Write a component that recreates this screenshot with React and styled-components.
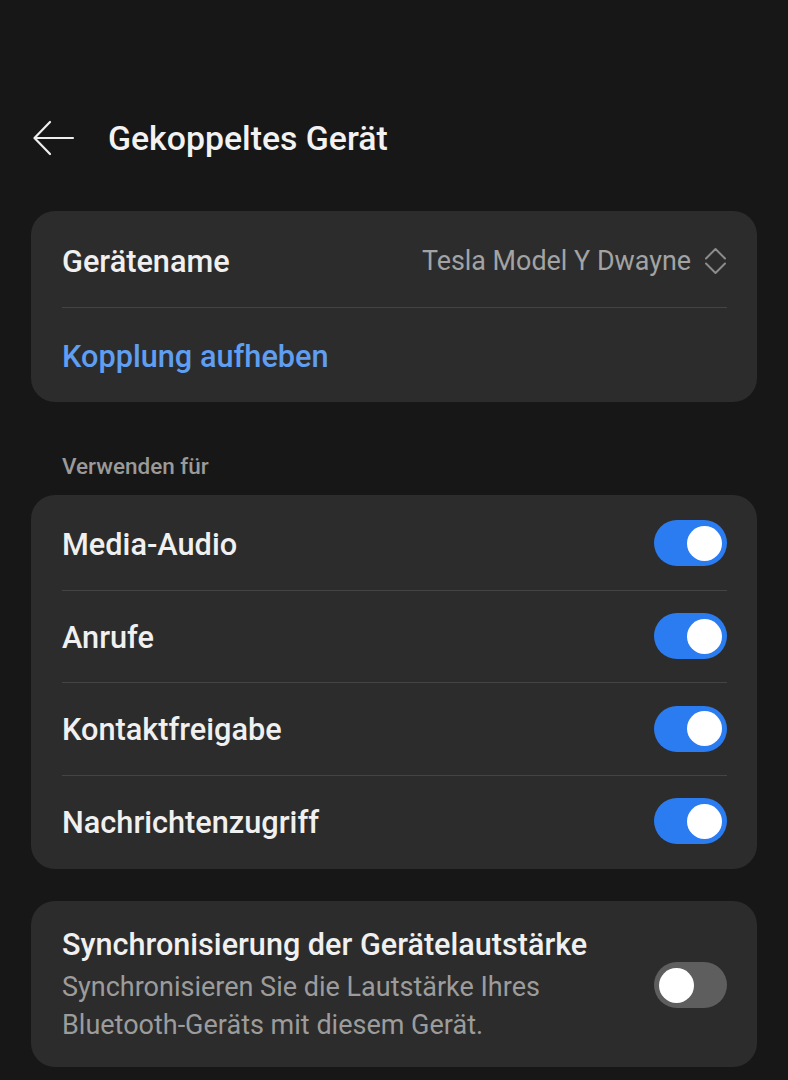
import React, { useState } from "react";
import styled, { createGlobalStyle } from "styled-components";

const GlobalStyle = createGlobalStyle`
  html, body {
    margin: 0;
    padding: 0;
    background: #171717;
  }
  body {
    font-family: Roboto, "Noto Sans", "Liberation Sans", sans-serif;
    -webkit-font-smoothing: antialiased;
  }
`;

const StyledPage = styled.div`
  width: 788px;
  min-height: 1080px;
  box-sizing: border-box;
  padding: 110px 31px 0;
  background: #171717;
`;

const StyledHeader = styled.div`
  height: 56px;
  display: flex;
  align-items: center;
  gap: 33px;
  margin-bottom: 45px;
  padding-left: 2px;
`;

const BackButton = styled.button`
  width: 42px;
  height: 42px;
  padding: 0;
  border: none;
  background: none;
  display: flex;
  align-items: center;
  justify-content: center;
`;

const Title = styled.h1`
  margin: 0;
  font-size: 33.8px;
  font-weight: 500;
  color: #f2f2f2;
`;

const Card = styled.div`
  background: #2c2c2c;
  border-radius: 24px;
  padding: ${(p) => p.$pad || "0"} 30px ${(p) => p.$padBottom || p.$pad || "0"} 31px;
  margin-bottom: ${(p) => p.$gap || "0"};
`;

const Row = styled.div`
  height: ${(p) => p.$height || 94}px;
  display: flex;
  align-items: center;
  justify-content: space-between;
  border-top: ${(p) => (p.$divider ? "1.5px solid #444444" : "none")};
  box-sizing: border-box;
`;

const Label = styled.span`
  padding-top: ${(p) => p.$nudge || 2}px;
  font-size: 30.7px;
  font-weight: 500;
  color: ${(p) => (p.$link ? "#5f9ef0" : "#f0f0f0")};
`;

const Value = styled.div`
  display: flex;
  align-items: center;
  gap: 13px;
  padding-top: 3px;
  font-size: 26.9px;
  color: #a3a3a3;
`;

const SectionLabel = styled.div`
  padding: 50px 0 0 31px;
  height: 28px;
  line-height: 28px;
  margin-bottom: 15px;
  font-size: 22.5px;
  font-weight: 500;
  color: #9a9a9a;
`;

const SyncRow = styled.div`
  display: flex;
  align-items: center;
  justify-content: space-between;
  gap: 20px;
`;

const SyncText = styled.div`
  display: flex;
  flex-direction: column;
`;

const SyncTitle = styled.div`
  font-size: 30.6px;
  font-weight: 500;
  line-height: 38px;
  margin-bottom: 4px;
  color: #f0f0f0;
  white-space: nowrap;
`;

const SyncDesc = styled.div`
  font-size: 27px;
  line-height: 38px;
  color: #9c9c9c;
  white-space: nowrap;
`;

const Track = styled.button`
  flex: none;
  width: 73px;
  height: 46px;
  border-radius: 23px;
  border: none;
  padding: 0 5px;
  display: flex;
  align-items: center;
  justify-content: ${(p) => (p.$on ? "flex-end" : "flex-start")};
  background: ${(p) => (p.$on ? "#2b7cf1" : "#5e5e5e")};
  cursor: pointer;
`;

const Knob = styled.span`
  width: 35px;
  height: 35px;
  border-radius: 50%;
  background: #ffffff;
`;

const Toggle = ({ on, onClick }) => (
  <Track $on={on} onClick={onClick}>
    <Knob />
  </Track>
);

const BackIcon = () => (
  <svg width="42" height="42" viewBox="0 0 42 42" fill="none">
    <path
      d="M40 21 H2 M17 5 L1.5 21 L17 37"
      stroke="#eeeeee"
      strokeWidth="2.2"
      strokeLinecap="round"
      strokeLinejoin="round"
    />
  </svg>
);

const UpDownIcon = () => (
  <svg width="23" height="28" viewBox="0 0 23 28" fill="none">
    <path
      d="M2 11.5 L11.5 2 L21 11.5 M2 16.5 L11.5 26 L21 16.5"
      stroke="#8c8c8c"
      strokeWidth="2"
      strokeLinecap="round"
      strokeLinejoin="round"
    />
  </svg>
);

const App = () => {
  const [uses, setUses] = useState([
    { name: "Media-Audio", on: true },
    { name: "Anrufe", on: true },
    { name: "Kontaktfreigabe", on: true },
    { name: "Nachrichtenzugriff", on: true },
  ]);
  const [sync, setSync] = useState(false);

  const flip = (i) =>
    setUses(uses.map((u, j) => (j === i ? { ...u, on: !u.on } : u)));

  return (
    <StyledPage>
      <GlobalStyle />
      <StyledHeader>
        <BackButton>
          <BackIcon />
        </BackButton>
        <Title>Gekoppeltes Gerät</Title>
      </StyledHeader>

      <Card>
        <Row $height={96}>
          <Label $nudge={4}>Gerätename</Label>
          <Value>
            Tesla Model Y Dwayne
            <UpDownIcon />
          </Value>
        </Row>
        <Row $height={95} $divider>
          <Label $link>Kopplung aufheben</Label>
        </Row>
      </Card>

      <SectionLabel>Verwenden für</SectionLabel>

      <Card $pad="2px" $gap="32px">
        {uses.map((u, i) => (
          <Row key={u.name} $height={92.5} $divider={i > 0}>
            <Label>{u.name}</Label>
            <Toggle on={u.on} onClick={() => flip(i)} />
          </Row>
        ))}
      </Card>

      <Card $pad="25px" $padBottom="23px">
        <SyncRow>
          <SyncText>
            <SyncTitle>Synchronisierung der Gerätelautstärke</SyncTitle>
            <SyncDesc>
              Synchronisieren Sie die Lautstärke Ihres
              <br />
              Bluetooth-Geräts mit diesem Gerät.
            </SyncDesc>
          </SyncText>
          <Toggle on={sync} onClick={() => setSync(!sync)} />
        </SyncRow>
      </Card>
    </StyledPage>
  );
};

export default App;
